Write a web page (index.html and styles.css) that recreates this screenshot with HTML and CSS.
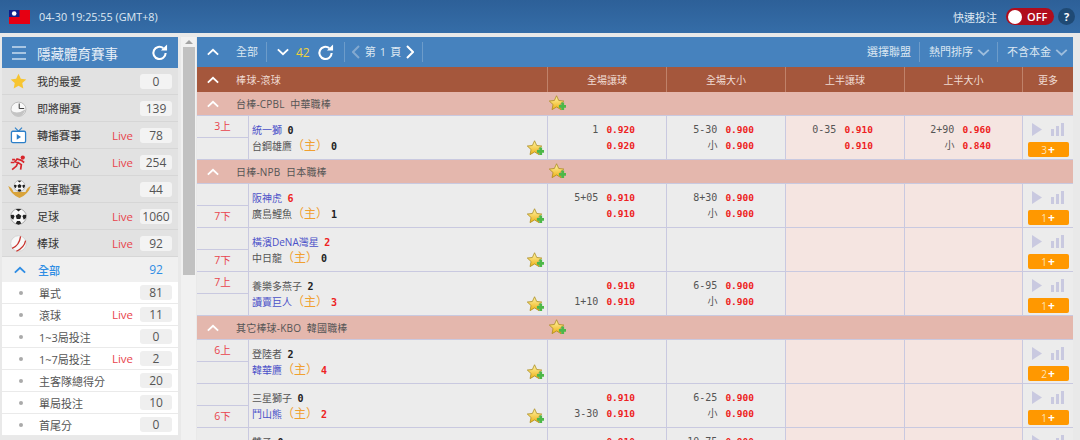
FILE: index.html
```html
<!DOCTYPE html>
<html lang="zh-Hant">
<head>
    <meta charset="UTF-8">
    <title>隱藏體育賽事</title>
    <link rel="stylesheet" href="styles.css">
</head>
<body>
    <svg class="defs" width="0" height="0">
        <defs>
            <linearGradient id="gold" x1="0" y1="0" x2="0" y2="1">
                <stop offset="0" stop-color="#fff6a8"/>
                <stop offset="1" stop-color="#eeb014"/>
            </linearGradient>
            <symbol id="fav" viewBox="0 0 18 18">
                <path d="M8 .8l2.300 5 5.400.6-4 3.700 1.100 5.400L8 12.700l-4.800 2.800 1.100-5.400-4-3.700 5.400-.6z" fill="url(#gold)" stroke="#a98a1a" stroke-width=".8"/>
                <path d="M10.500 10.500h2.500V8h3v2.500H18.500v3H16V16h-3v-2.500h-2.500z" fill="#4db848"/>
            </symbol>
            <symbol id="play" viewBox="0 0 32 13">
                <path d="M0 0l10 6.500L0 13z" fill="#c9c9e0"/>
                <path d="M19 6h3v7h-3zM24 3h3v10h-3zM29 0h3v13h-3z" fill="#c9c9e0"/>
            </symbol>
            <symbol id="up" viewBox="0 0 14 8">
                <path d="M1 7l6-5.500L13 7" fill="none" stroke="currentColor" stroke-width="2.200"/>
            </symbol>
            <symbol id="next" viewBox="0 0 8 14">
                <path d="M1 1l6 6-6 6" fill="none" stroke="currentColor" stroke-width="2"/>
            </symbol>
            <symbol id="reload" viewBox="0 0 18 18">
                <path d="M15.500 9.500A6.500 6.500 0 1 1 13 4.300" fill="none" stroke="currentColor" stroke-width="2.200"/>
                <path d="M10.500 7H17V.5z" fill="currentColor"/>
            </symbol>
            <symbol id="ball" viewBox="0 0 24 24">
                <circle cx="12" cy="12" r="11" fill="#f6f6f6" stroke="#555" stroke-width=".6"/>
                <path d="M12 8l4 3-1.500 4.500h-5L8 11zM8 1.500h8L12 5zM23 10l-4-.5-1.500 2 2 5 3-2.500zM1 10l4-.5 1.500 2-2 5-3-2.500zM8 22l2-3.500h4l2 3.500-4 1.500z" fill="#222"/>
            </symbol>
        </defs>
    </svg>

    <header class="topbar">
        <svg class="flag" viewBox="0 0 21 14">
            <rect width="21" height="14" fill="#e60012"/>
            <rect width="10.500" height="7" fill="#10218b"/>
            <circle cx="5.200" cy="3.500" r="2.300" fill="#fff"/>
        </svg>
        <span class="clock">04-30 19:25:55 (GMT+8)</span>
        <span class="quick">快速投注</span>
        <span class="toggle"><i></i>OFF</span>
        <span class="help">?</span>
    </header>

    <div class="page">
        <aside class="sidebar">
            <div class="side-head">
                <span class="burger"><i></i><i></i><i></i></span>
                <span class="side-title">隱藏體育賽事</span>
                <svg class="side-reload"><use href="#reload"/></svg>
            </div>
            <ul class="sports">
                <li>
                    <svg class="ico" viewBox="0 0 24 24"><path d="M12 1l3.300 7 7.700 1-5.700 5.200 1.500 7.800-6.800-3.900L5.200 22l1.500-7.800L1 9l7.700-1z" fill="#f7c531"/></svg>
                    <span class="name">我的最愛</span><b class="count">0</b>
                </li>
                <li>
                    <svg class="ico" viewBox="0 0 24 24"><ellipse cx="12" cy="13" rx="10.500" ry="10" fill="#f8f8f8" stroke="#aaa"/><path d="M13 12V5M13 12h7" stroke="#444" stroke-width="1.500"/><path d="M2 15q8 6 20-2q-3 10-11 10q-7-1-9-8z" fill="#c4c4c4"/></svg>
                    <span class="name">即將開賽</span><b class="count">139</b>
                </li>
                <li>
                    <svg class="ico" viewBox="0 0 24 24"><rect x="2" y="6" width="20" height="16" rx="2" fill="#fff" stroke="#2b7fc9" stroke-width="1.800"/><path d="M7 1l5 5 5-5" fill="none" stroke="#2b7fc9" stroke-width="1.500"/><path d="M9.500 10l6 4-6 4z" fill="#2b7fc9"/></svg>
                    <span class="name">轉播賽事</span><span class="live">Live</span><b class="count">78</b>
                </li>
                <li>
                    <svg class="ico" viewBox="0 0 24 24"><circle cx="18" cy="5" r="3" fill="#d8262c"/><path d="M3 22l6-5 2-5-4-1 3-4 6 2 4 3M11 12l5 3-1 7M1 12h5M3 8h4" fill="none" stroke="#d8262c" stroke-width="2.400"/></svg>
                    <span class="name">滾球中心</span><span class="live">Live</span><b class="count">254</b>
                </li>
                <li>
                    <svg class="ico ico-wide" viewBox="0 0 30 24"><path d="M0 8q3 11 15 16q12-5 15-16q-5 2-7 8H7q-2-6-7-8z" fill="#d9a33a"/><use href="#ball" x="7" y="0" width="16" height="16"/></svg>
                    <span class="name">冠軍聯賽</span><b class="count">44</b>
                </li>
                <li>
                    <svg class="ico"><use href="#ball"/></svg>
                    <span class="name">足球</span><span class="live">Live</span><b class="count">1060</b>
                </li>
                <li>
                    <svg class="ico" viewBox="0 0 24 24"><circle cx="12" cy="12" r="11" fill="#f8f8f8" stroke="#ccc"/><path d="M3 19Q13 15 15 2M9 23Q20 18 22 8" fill="none" stroke="#c8322c" stroke-width="1.800"/></svg>
                    <span class="name">棒球</span><span class="live">Live</span><b class="count">92</b>
                </li>
                <li class="open">
                    <svg class="open-arrow"><use href="#up"/></svg>
                    <span class="name">全部</span><b class="count">92</b>
                </li>
            </ul>
            <ul class="subs">
                <li><i class="dot"></i><span class="name">單式</span><b class="count">81</b></li>
                <li><i class="dot"></i><span class="name">滾球</span><span class="live">Live</span><b class="count">11</b></li>
                <li><i class="dot"></i><span class="name">1~3局投注</span><b class="count">0</b></li>
                <li><i class="dot"></i><span class="name">1~7局投注</span><span class="live">Live</span><b class="count">2</b></li>
                <li><i class="dot"></i><span class="name">主客隊總得分</span><b class="count">20</b></li>
                <li><i class="dot"></i><span class="name">單局投注</span><b class="count">10</b></li>
                <li><i class="dot"></i><span class="name">首尾分</span><b class="count">0</b></li>
            </ul>
        </aside>

        <div class="scrollbar"><span class="scroll-up"></span><span class="scroll-thumb"></span></div>

        <main class="main">
            <div class="toolbar">
                <svg class="chev"><use href="#up"/></svg>
                <span class="tool-all">全部</span>
                <svg class="chev-down"><use href="#up"/></svg>
                <span class="tool-num">42</span>
                <svg class="tool-reload"><use href="#reload"/></svg>
                <span class="pager">
                    <svg class="pg pg-prev"><use href="#next"/></svg>
                    <span class="pg-label">第 1 頁</span>
                    <svg class="pg"><use href="#next"/></svg>
                </span>
                <span class="tool-right">選擇聯盟</span>
                <span class="tool-right sep">熱門排序<svg class="caret"><use href="#up"/></svg></span>
                <span class="tool-right sep">不含本金<svg class="caret"><use href="#up"/></svg></span>
            </div>

            <table class="odds">
                <colgroup>
                    <col class="c-time"><col class="c-team"><col class="c-odd"><col class="c-odd"><col class="c-odd"><col class="c-odd-last"><col>
                </colgroup>
                <tr class="head">
                    <th colspan="2" class="head-title"><svg class="chev"><use href="#up"/></svg>棒球-滾球</th>
                    <th>全場讓球</th><th>全場大小</th><th>上半讓球</th><th>上半大小</th><th>更多</th>
                </tr>

                <tr class="league">
                    <td colspan="7"><div class="league-in"><svg class="chev"><use href="#up"/></svg><span class="league-name">台棒-CPBL  中華職棒</span><svg class="fav"><use href="#fav"/></svg></div></td>
                </tr>
                <tr class="match">
                    <td class="time"><div>3上</div><div></div></td>
                    <td class="team"><div class="team-in">
                        <p class="blue">統一獅 <b class="sc">0</b></p>
                        <p>台鋼雄鷹<span class="home">（主）</span><b class="sc">0</b></p>
                        <svg class="fav"><use href="#fav"/></svg>
                    </div></td>
                    <td class="odd"><p>1<b>0.920</b></p><p><b>0.920</b></p></td>
                    <td class="odd"><p>5-30<b>0.900</b></p><p>小<b>0.900</b></p></td>
                    <td class="odd half"><p>0-35<b>0.910</b></p><p><b>0.910</b></p></td>
                    <td class="odd half"><p>2+90<b>0.960</b></p><p>小<b>0.840</b></p></td>
                    <td class="more"><svg class="play"><use href="#play"/></svg><span class="btn">3<i>+</i></span></td>
                </tr>

                <tr class="league">
                    <td colspan="7"><div class="league-in"><svg class="chev"><use href="#up"/></svg><span class="league-name">日棒-NPB  日本職棒</span><svg class="fav"><use href="#fav"/></svg></div></td>
                </tr>
                <tr class="match">
                    <td class="time"><div></div><div>7下</div></td>
                    <td class="team"><div class="team-in">
                        <p class="blue">阪神虎 <b class="sc red">6</b></p>
                        <p>廣島鯉魚<span class="home">（主）</span><b class="sc">1</b></p>
                        <svg class="fav"><use href="#fav"/></svg>
                    </div></td>
                    <td class="odd"><p>5+05<b>0.910</b></p><p><b>0.910</b></p></td>
                    <td class="odd"><p>8+30<b>0.900</b></p><p>小<b>0.900</b></p></td>
                    <td class="odd half"></td>
                    <td class="odd half"></td>
                    <td class="more"><svg class="play"><use href="#play"/></svg><span class="btn">1<i>+</i></span></td>
                </tr>
                <tr class="match">
                    <td class="time"><div></div><div>7下</div></td>
                    <td class="team"><div class="team-in">
                        <p class="blue">橫濱DeNA灣星 <b class="sc red">2</b></p>
                        <p>中日龍<span class="home">（主）</span><b class="sc">0</b></p>
                        <svg class="fav"><use href="#fav"/></svg>
                    </div></td>
                    <td class="odd"></td>
                    <td class="odd"></td>
                    <td class="odd half"></td>
                    <td class="odd half"></td>
                    <td class="more"><svg class="play"><use href="#play"/></svg><span class="btn">1<i>+</i></span></td>
                </tr>
                <tr class="match">
                    <td class="time"><div>7上</div><div></div></td>
                    <td class="team"><div class="team-in">
                        <p>養樂多燕子 <b class="sc">2</b></p>
                        <p class="blue">讀賣巨人<span class="home">（主）</span><b class="sc red">3</b></p>
                        <svg class="fav"><use href="#fav"/></svg>
                    </div></td>
                    <td class="odd"><p><b>0.910</b></p><p>1+10<b>0.910</b></p></td>
                    <td class="odd"><p>6-95<b>0.900</b></p><p>小<b>0.900</b></p></td>
                    <td class="odd half"></td>
                    <td class="odd half"></td>
                    <td class="more"><svg class="play"><use href="#play"/></svg><span class="btn">1<i>+</i></span></td>
                </tr>

                <tr class="league">
                    <td colspan="7"><div class="league-in"><svg class="chev"><use href="#up"/></svg><span class="league-name">其它棒球-KBO  韓國職棒</span><svg class="fav"><use href="#fav"/></svg></div></td>
                </tr>
                <tr class="match">
                    <td class="time"><div>6上</div><div></div></td>
                    <td class="team"><div class="team-in">
                        <p>登陸者 <b class="sc">2</b></p>
                        <p class="blue">韓華鷹<span class="home">（主）</span><b class="sc red">4</b></p>
                        <svg class="fav"><use href="#fav"/></svg>
                    </div></td>
                    <td class="odd"></td>
                    <td class="odd"></td>
                    <td class="odd half"></td>
                    <td class="odd half"></td>
                    <td class="more"><svg class="play"><use href="#play"/></svg><span class="btn">2<i>+</i></span></td>
                </tr>
                <tr class="match">
                    <td class="time"><div></div><div>6下</div></td>
                    <td class="team"><div class="team-in">
                        <p>三星獅子 <b class="sc">0</b></p>
                        <p class="blue">鬥山熊<span class="home">（主）</span><b class="sc red">2</b></p>
                        <svg class="fav"><use href="#fav"/></svg>
                    </div></td>
                    <td class="odd"><p><b>0.910</b></p><p>3-30<b>0.910</b></p></td>
                    <td class="odd"><p>6-25<b>0.900</b></p><p>小<b>0.900</b></p></td>
                    <td class="odd half"></td>
                    <td class="odd half"></td>
                    <td class="more"><svg class="play"><use href="#play"/></svg><span class="btn">1<i>+</i></span></td>
                </tr>
                <tr class="match">
                    <td class="time"><div></div><div></div></td>
                    <td class="team"><div class="team-in">
                        <p>雙子 <b class="sc">0</b></p>
                        <p></p>
                    </div></td>
                    <td class="odd"><p><b>0.910</b></p><p></p></td>
                    <td class="odd"><p>10-75<b>0.900</b></p><p></p></td>
                    <td class="odd half"></td>
                    <td class="odd half"></td>
                    <td class="more"><svg class="play"><use href="#play"/></svg></td>
                </tr>
            </table>
        </main>
    </div>
</body>
</html>
```

FILE: styles.css
```css
:root {
    --top: #2f659f;
    --blue: #4682be;
    --brown: #a5573c;
    --league: #e4b7ad;
    --cell: #ececec;
    --pink: #f5e5e1;
    --line: #c9c9e0;
    --red: #ee2222;
}

* {
    margin: 0;
    padding: 0;
    box-sizing: border-box;
}

html, body {
    height: 440px;
    overflow: hidden;
}

body {
    font-family: "Open Sans", "Noto Sans CJK TC", sans-serif;
    font-size: 10px;
    color: #555;
    background: #e9e9e9;
}

.defs {
    position: absolute;
}

ul {
    list-style: none;
}

/* top bar */
.topbar {
    height: 33px;
    display: flex;
    align-items: center;
    padding: 0 5px 0 9px;
    background: linear-gradient(#2d6098, #356da8);
    color: #dfe8f2;
}

.flag {
    width: 21px;
    height: 14px;
}

.clock {
    margin-left: 9px;
    font-size: 10.800px;
    flex: 1;
}

.quick {
    font-size: 11px;
    margin-right: 9px;
}

.toggle {
    width: 48px;
    height: 17px;
    border-radius: 9px;
    background: #b00d1c;
    color: #fff;
    font-size: 11px;
    font-weight: 600;
    display: flex;
    align-items: center;
    padding-left: 2px;
    gap: 5px;
}

.toggle i {
    width: 14px;
    height: 14px;
    border-radius: 50%;
    background: #fff;
}

.help {
    width: 17px;
    height: 17px;
    margin-left: 4px;
    border-radius: 50%;
    background: #1f4a75;
    color: #fff;
    font-size: 11px;
    font-weight: 700;
    text-align: center;
    line-height: 17px;
}

.page {
    display: flex;
    padding: 4px 7px 0 2px;
}

/* left menu */
.sidebar {
    width: 176px;
    flex: none;
    color: #333;
    font-size: 11px;
}

.side-head {
    height: 31px;
    background: var(--blue);
    color: #e8f0f8;
    display: flex;
    align-items: center;
    padding: 0 10px;
}

.burger {
    width: 14px;
    display: flex;
    flex-direction: column;
    gap: 4px;
}

.burger i {
    height: 2px;
    background: #a9c6e3;
}

.side-title {
    margin-left: 11px;
    font-size: 13.500px;
    flex: 1;
}

.side-reload {
    width: 17px;
    height: 17px;
    color: #fff;
}

.sports li {
    height: 27px;
    display: flex;
    align-items: center;
    background: #e2e2e2;
    border-bottom: 1px solid #d6d6d6;
    padding-right: 6px;
}

.sports li.open {
    height: 25px;
    background: #f0f0f0;
    color: #2f8de4;
    font-weight: 500;
    border: 0;
}

.ico {
    width: 17px;
    height: 17px;
    margin: 0 10px 0 8px;
    flex: none;
}

.ico-wide {
    width: 23px;
    height: 18px;
    margin: 0 6px 0 6px;
}

.open-arrow {
    width: 12px;
    height: 8px;
    margin: 0 12px 0 12px;
    color: #2f8de4;
}

.name {
    flex: 1;
}

.live {
    color: #e8444c;
    font-size: 11.500px;
    margin-right: 7px;
}

.count {
    width: 32px;
    height: 15px;
    background: #f3f3f3;
    border-radius: 3px;
    text-align: center;
    line-height: 15px;
    font-weight: 400;
    color: #555;
    font-size: 12px;
}

.open .count {
    background: none;
    color: #2f8de4;
}

.subs {
    background: #fff;
    color: #555;
}

.subs li {
    height: 22px;
    display: flex;
    align-items: center;
    padding-right: 6px;
    border-bottom: 1px solid #eaeaea;
}

.dot {
    width: 4px;
    height: 4px;
    border-radius: 50%;
    background: #aaa;
    margin: 0 16px 0 17px;
}

.subs .count {
    background: #efefef;
}

/* scrollbar */
.scrollbar {
    width: 15px;
    margin: 0 1px 0 3px;
    background: #f1f1f1;
    height: 403px;
    flex: none;
    display: flex;
    flex-direction: column;
    align-items: center;
}

.scroll-up {
    width: 0;
    height: 0;
    margin: 3px 0;
    border: 4px solid transparent;
    border-top: 0;
    border-bottom: 4px solid #a3a3a3;
}

.scroll-thumb {
    width: 12px;
    height: 228px;
    background: #c1c1c1;
}

/* main panel */
.main {
    flex: 1;
    min-width: 0;
}

.toolbar {
    height: 30px;
    background: var(--blue);
    color: #dbe7f2;
    display: flex;
    align-items: center;
    font-size: 11px;
}

.chev {
    width: 12px;
    height: 8px;
    color: #fff;
    margin: 0 17px 0 10px;
    flex: none;
    vertical-align: 0;
}

.tool-all {
    padding-right: 8px;
    border-right: 1px solid #6d9cca;
    line-height: 20px;
}

.chev-down {
    width: 12px;
    height: 8px;
    color: #fff;
    transform: scaleY(-1);
    margin: 0 7px 0 10px;
}

.tool-num {
    color: #f0d23c;
    font-size: 12px;
}

.tool-reload {
    width: 17px;
    height: 17px;
    color: #fff;
    margin: 0 10px 0 7px;
}

.pager {
    flex: 1;
    display: flex;
    align-items: center;
    line-height: 20px;
}

.pager::before,
.pager::after {
    content: "";
    width: 1px;
    height: 20px;
    background: #6d9cca;
}

.pg {
    width: 8px;
    height: 14px;
    color: #fff;
    margin: 0 8px 0 4px;
}

.pg-prev {
    color: #83a9d0;
    margin: 0 5px 0 7px;
    transform: scaleX(-1);
}

.pg-label {
    white-space: pre;
    width: 37px;
    letter-spacing: .6px;
}

.tool-right {
    padding: 0 8px 0 9px;
    line-height: 20px;
    display: flex;
    align-items: center;
    white-space: nowrap;
}

.tool-right.sep {
    border-left: 1px solid #6d9cca;
    padding-right: 7px;
}

.tool-right:last-child {
    padding-right: 5px;
}

.caret {
    width: 13px;
    height: 7px;
    margin-left: 4px;
    color: #9dbddd;
    transform: scaleY(-1);
}

.odds {
    width: 100%;
    border-collapse: separate;
    border-spacing: 0;
    table-layout: fixed;
}

.c-time {
    width: 52px;
}

.c-team {
    width: 299px;
}

.c-odd {
    width: 119px;
}

.c-odd-last {
    width: 118px;
}

.head th {
    height: 25px;
    background: var(--brown);
    color: #f0dcd4;
    font-weight: 400;
    border-right: 1px solid #c0826a;
}

.head th:last-child {
    border-right: 0;
}

.head .head-title {
    text-align: left;
    letter-spacing: .4px;
}

.league td {
    height: 24px;
    background: var(--league);
    border-bottom: 1px solid var(--line);
}

.league-in {
    display: flex;
    align-items: center;
    color: #555;
}

.league-name {
    width: 313px;
    white-space: pre;
    letter-spacing: .2px;
}

.fav {
    width: 17px;
    height: 17px;
}

.match td {
    height: 44px;
    background: var(--cell);
    border-bottom: 1px solid var(--line);
    border-right: 1px solid var(--line);
    vertical-align: middle;
}

.match td:last-child {
    border-right: 0;
}

.match .time {
    padding: 0;
    color: #e8444c;
    text-align: center;
    font-size: 10.500px;
}

.time div {
    height: 21px;
    line-height: 21px;
}

.time div:first-child {
    height: 22px;
    border-bottom: 1px solid var(--line);
}

.team-in {
    position: relative;
    padding-left: 3px;
    height: 32px;
}

.team-in p {
    height: 16px;
    line-height: 16px;
    white-space: nowrap;
}

.team-in .fav {
    position: absolute;
    right: 3px;
    top: 18px;
}

.blue {
    color: #4a50c8;
}

.home {
    color: #f0a030;
    font-size: 12px;
}

.sc {
    font-family: "DejaVu Sans Mono", monospace;
    font-size: 10px;
    color: #222;
    margin-left: 3px;
}

.red {
    color: var(--red);
}

.odd {
    padding-right: 31px;
    text-align: right;
    font-family: "DejaVu Sans Mono", "Noto Sans CJK TC", monospace;
    font-size: 10px;
    color: #555;
}

.match td.half {
    background: var(--pink);
}

.odd p {
    height: 16px;
    line-height: 16px;
}

.odd b {
    display: inline-block;
    margin-left: 8px;
    font-size: 9.500px;
    color: var(--red);
}

.match .more {
    text-align: center;
    vertical-align: top;
    padding-top: 7px;
}

.play {
    width: 32px;
    height: 13px;
    display: block;
    margin: 0 auto 6px;
}

.btn {
    display: block;
    width: 41px;
    height: 15px;
    margin: 0 auto;
    background: #ff9800;
    color: #fde3b8;
    border-radius: 2px;
    font-size: 10px;
    line-height: 15px;
}

.btn i {
    font-style: normal;
    font-weight: 700;
    font-size: 12px;
    color: #fff;
    margin-left: 1px;
}
```
